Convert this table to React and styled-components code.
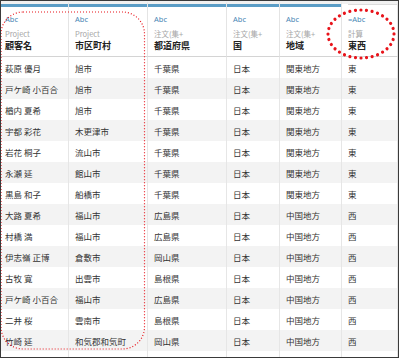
import styled, { createGlobalStyle } from "styled-components";

const GlobalStyle = createGlobalStyle`
  body {
    margin: 0;
    background: #ffffff;
  }
`;

const columns = "68px 79px 79px 53px 62px 1fr";

const fields = [
  { type: "Abc", origin: "Project", name: "顧客名" },
  { type: "Abc", origin: "Project", name: "市区町村" },
  { type: "Abc", origin: "注文(集+", name: "都道府県" },
  { type: "Abc", origin: "注文(集+", name: "国" },
  { type: "Abc", origin: "注文(集+", name: "地域" },
  { type: "=Abc", origin: "計算", name: "東西", calc: true },
];

const east = ["旭市", "千葉県", "日本", "関東地方", "東"];

const rows = [
  ["萩原 優月", ...east],
  ["戸ケ崎 小百合", ...east],
  ["楢内 夏希", ...east],
  ["宇都 彩花", "木更津市", "千葉県", "日本", "関東地方", "東"],
  ["岩花 桐子", "流山市", "千葉県", "日本", "関東地方", "東"],
  ["永瀬 延", "館山市", "千葉県", "日本", "関東地方", "東"],
  ["黒島 和子", "船橋市", "千葉県", "日本", "関東地方", "東"],
  ["大路 夏希", "福山市", "広島県", "日本", "中国地方", "西"],
  ["村橋 満", "福山市", "広島県", "日本", "中国地方", "西"],
  ["伊志嶺 正博", "倉敷市", "岡山県", "日本", "中国地方", "西"],
  ["古牧 寛", "出雲市", "島根県", "日本", "中国地方", "西"],
  ["戸ケ崎 小百合", "福山市", "広島県", "日本", "中国地方", "西"],
  ["二井 桜", "雲南市", "島根県", "日本", "中国地方", "西"],
  ["竹崎 延", "和気郡和気町", "岡山県", "日本", "中国地方", "西"],
  ["", "", "", "", "", ""],
];

const App = () => {
  return (
    <>
      <GlobalStyle />
      <Frame>
        <HeaderRow>
          {fields.map((f, i) => (
            <HeaderCell key={f.name} $lead={i === 0}>
              <Bar $calc={f.calc} />
              <TypeLabel>{f.type}</TypeLabel>
              <Origin>{f.origin}</Origin>
              <FieldName>{f.name}</FieldName>
            </HeaderCell>
          ))}
        </HeaderRow>
        {rows.map((r, ri) => (
          <Row key={ri} $alt={ri % 2 === 1}>
            {r.map((v, ci) => (
              <Cell key={ci} $lead={ci === 0}>
                {v}
              </Cell>
            ))}
          </Row>
        ))}
        <Marks viewBox="0 0 399 358">
          <rect
            x="1"
            y="12"
            width="143.5"
            height="337"
            rx="22"
            fill="none"
            stroke="#e8141b"
            strokeWidth="1.2"
            strokeDasharray="1 2"
          />
          <ellipse
            cx="361"
            cy="34"
            rx="33"
            ry="24"
            fill="none"
            stroke="#e8141b"
            strokeWidth="3.2"
            strokeLinecap="round"
            strokeDasharray="0.01 5.6"
          />
        </Marks>
      </Frame>
    </>
  );
};

export default App;

const Frame = styled.div`
  position: relative;
  width: 399px;
  height: 358px;
  box-sizing: border-box;
  border: 1px solid #3a3a3a;
  overflow: hidden;
  background: #ffffff;
  font-family: "Noto Sans CJK JP", "Noto Sans", sans-serif;
`;

const HeaderRow = styled.div`
  display: grid;
  grid-template-columns: ${columns};
  height: 56px;
`;

const HeaderCell = styled.div`
  display: flex;
  flex-direction: column;
  box-sizing: border-box;
  border-top: 3px solid #f1f1f1;
  border-right: 1px solid #e4e4e4;
  border-bottom: 1px solid #d4d4d4;
  padding-left: ${(p) => (p.$lead ? "4px" : "6px")};
  overflow: hidden;
  white-space: nowrap;
`;

const Bar = styled.div`
  height: ${(p) => (p.$calc ? "1px" : "3px")};
  margin: 0 0 ${(p) => (p.$calc ? "9px" : "7px")} ${(p) => (p.$calc ? "0" : "-6px")};
  background: ${(p) => (p.$calc ? "#dcdcdc" : "#5b9dc6")};
`;

const TypeLabel = styled.div`
  font-family: "Noto Sans", sans-serif;
  font-size: 7.5px;
  line-height: 10px;
  color: #4a87b5;
`;

const Origin = styled.div`
  margin-top: 5px;
  font-size: 7.5px;
  line-height: 10px;
  color: #a6a6a6;
`;

const FieldName = styled.div`
  margin-top: 1px;
  font-size: 9px;
  line-height: 12px;
  font-weight: 700;
  color: #222222;
`;

const Row = styled.div`
  display: grid;
  grid-template-columns: ${columns};
  height: 21px;
  background: ${(p) => (p.$alt ? "#f3f3f3" : "#ffffff")};
`;

const Cell = styled.div`
  display: flex;
  align-items: center;
  box-sizing: border-box;
  border-right: 1px solid #e6e6e6;
  padding-left: ${(p) => (p.$lead ? "4px" : "6px")};
  font-size: 8.5px;
  color: #333333;
  white-space: nowrap;
  overflow: hidden;
`;

const Marks = styled.svg`
  position: absolute;
  top: -1px;
  left: -1px;
  width: 399px;
  height: 358px;
  pointer-events: none;
`;
